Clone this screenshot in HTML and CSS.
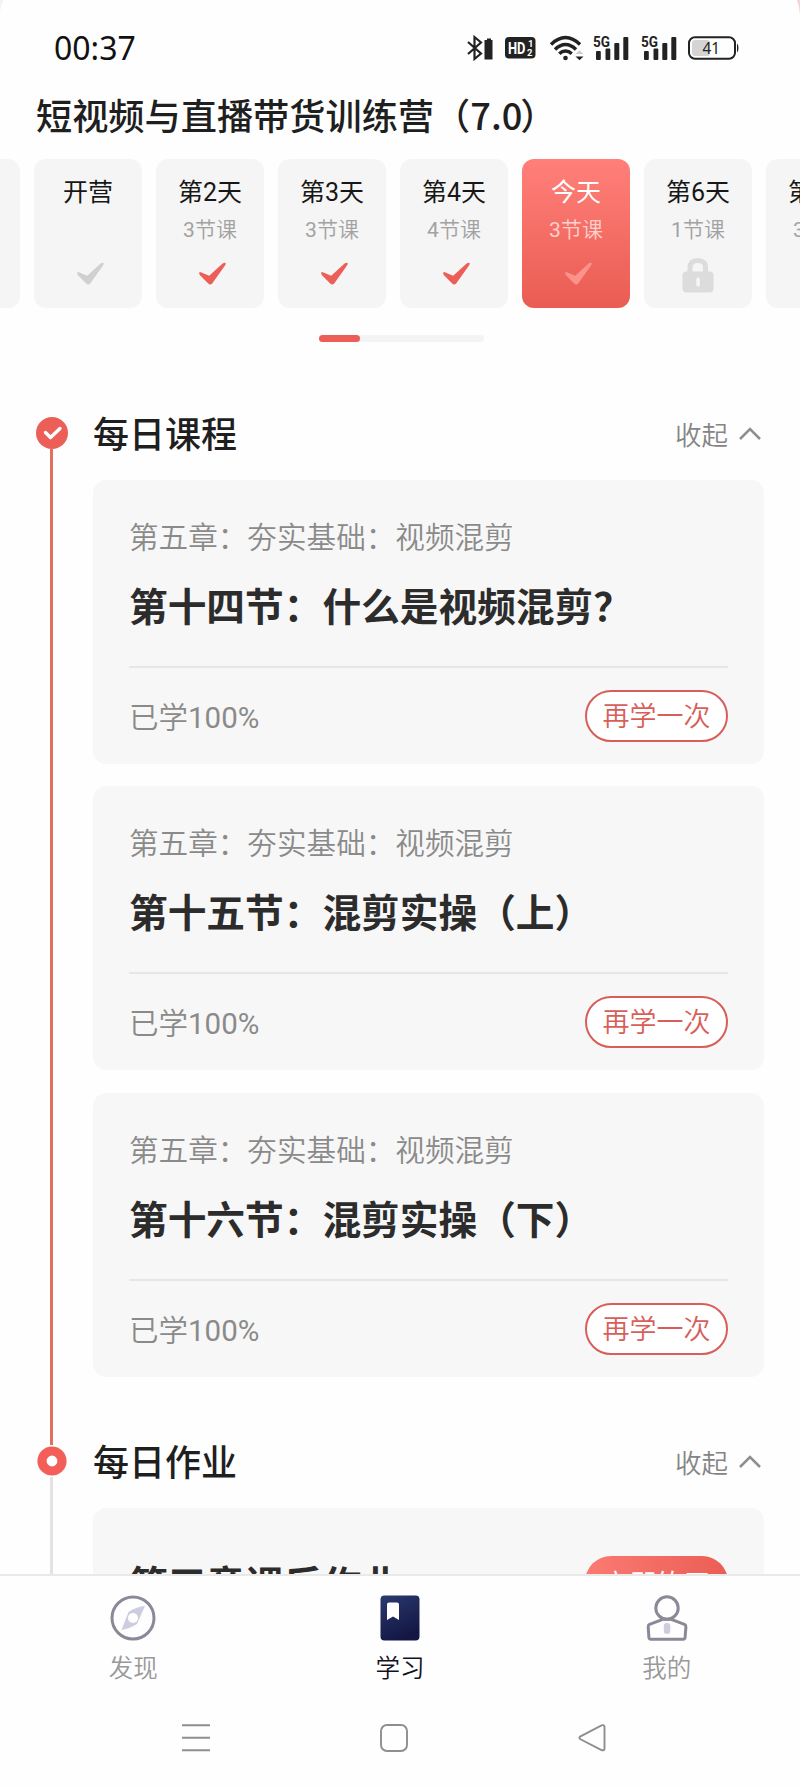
FILE: index.html
```html
<!DOCTYPE html>
<html lang="zh-CN">
<head>
<meta charset="utf-8">
<title>短视频与直播带货训练营</title>
<link rel="stylesheet" href="styles.css">
</head>
<body>
<svg class="defs" width="0" height="0" aria-hidden="true">
  <defs>
    <linearGradient id="book-fill" x1="0" y1="0" x2="0.4" y2="1"><stop offset="0" stop-color="#2a3a70"/><stop offset="1" stop-color="#141744"/></linearGradient>
    <symbol id="tick" viewBox="0 0 28 24"><path d="M1.2 11.2q0-1.400 1.600-1l8.400 3.600L24.600 1.600q2-1.200 2.900-.6.600.8-.5 2.500L14.200 21.500q-2 2.200-4 0L2 13.200q-.8-1-.8-2z"/></symbol>
    <symbol id="signal" viewBox="0 0 36 26"><g fill="#222"><rect x="3" y="16" width="4.800" height="9" rx="1"/><rect x="12.500" y="13.500" width="4.800" height="11.500" rx="1"/><rect x="21.300" y="8" width="5" height="17" rx="1"/><rect x="30.300" y="2" width="5" height="23" rx="1"/></g></symbol>
  </defs>
</svg>
<div class="phone">
  <svg class="corner corner-left" width="6" height="18" viewBox="0 0 6 18"><path d="M0 0H3Q1 4 0 12z" fill="#fbeeee"/></svg>
  <svg class="corner corner-right" width="6" height="18" viewBox="0 0 6 18"><path d="M6 0H3Q5 5 6 15z" fill="#f3d3d3"/></svg>

  <header class="status">
    <time class="clock">00:37</time>
    <div class="status-icons">
      <svg class="i-bt" width="26" height="26" viewBox="0 0 26 26"><path d="M1 7l13 11.500L7.500 24V2L14 7.500 1 19" fill="none" stroke="#222" stroke-width="2.200"/><path d="M20 3.500h4v1.500h1.500V24.500h-8V5H20z" fill="#222"/></svg>
      <svg class="i-hd" width="31" height="22" viewBox="0 0 31 22"><rect width="30.500" height="21.500" rx="4" fill="#222"/><text x="3" y="16.800" class="hd-text" textLength="17.500" lengthAdjust="spacingAndGlyphs">HD</text><text x="23" y="10" class="hd-num">1</text><text x="22" y="19" class="hd-num">2</text></svg>
      <svg class="i-wifi" width="34" height="26" viewBox="0 0 34 26"><g fill="none" stroke="#222" stroke-width="3.400"><path d="M1 9.500Q8 2.500 15.500 2.500T30 9.500"/><path d="M5 14.500Q10 9.500 15.500 9.500T26 14.500"/><path d="M9.300 18.700Q12 16 15.500 16T21.700 18.700"/></g><circle cx="15.500" cy="23" r="2.300" fill="#222"/><path d="M25.500 19l4-3.500 4 3.500z" fill="#ccc"/><path d="M25.500 21.500h8l-4 3.800z" fill="#222"/></svg>
      <svg class="i-signal" width="36" height="26"><use href="#signal"/><text x="0" y="12" class="net" textLength="17" lengthAdjust="spacingAndGlyphs">5G</text></svg>
      <svg class="i-signal second" width="36" height="26"><use href="#signal"/><text x="0" y="12" class="net" textLength="17" lengthAdjust="spacingAndGlyphs">5G</text></svg>
      <svg class="i-batt" width="52" height="24" viewBox="0 0 52 24"><rect x="4" y="4" width="18" height="16" rx="3" fill="#d4d4d4"/><rect x="1" y="1.200" width="46" height="21.500" rx="6" fill="none" stroke="#222" stroke-width="2"/><path d="M49.500 8.500q1 3.500 0 7z" fill="#222" stroke="#222"/><text x="14.500" y="18.300" class="batt-text" textLength="17.500" lengthAdjust="spacingAndGlyphs">41</text></svg>
    </div>
  </header>

  <main class="content">
    <h1 class="camp-title">短视频与直播带货训练营（7.0<span class="close">）</span></h1>

    <div class="days">
      <div class="day"></div>
      <div class="day"><strong>开营</strong><span></span><svg class="tick muted"><use href="#tick"/></svg></div>
      <div class="day"><strong>第2天</strong><span><b>3</b>节课</span><svg class="tick"><use href="#tick"/></svg></div>
      <div class="day"><strong>第3天</strong><span><b>3</b>节课</span><svg class="tick"><use href="#tick"/></svg></div>
      <div class="day"><strong>第4天</strong><span><b>4</b>节课</span><svg class="tick"><use href="#tick"/></svg></div>
      <div class="day today"><strong>今天</strong><span><b>3</b>节课</span><svg class="tick"><use href="#tick"/></svg></div>
      <div class="day"><strong>第6天</strong><span><b>1</b>节课</span><svg class="lock" width="32" height="35" viewBox="0 0 32 35"><path d="M8 15V10Q8 2.500 15.800 2.500T23.500 10V15" fill="none" stroke="#dcdcdc" stroke-width="5"/><rect x=".5" y="13.500" width="31" height="21" rx="4" fill="#dcdcdc"/><rect x="14.300" y="19.500" width="3.600" height="9" rx="1.500" fill="#f5f5f5"/></svg></div>
      <div class="day"><strong>第7天</strong><span><b>3</b>节课</span></div>
    </div>
    <div class="scroller"><i></i></div>

    <section class="step done">
      <div class="rail">
        <svg width="32" height="32" viewBox="0 0 32 32"><circle cx="16" cy="16" r="16" fill="#ec5f58"/><path d="M9.500 15.500l5 5 9.500-9" fill="none" stroke="#fff" stroke-width="3.400" stroke-linecap="round" stroke-linejoin="round"/></svg>
      </div>
      <div class="step-body">
        <div class="step-head"><h2>每日课程</h2><a class="fold">收起<svg width="22" height="13" viewBox="0 0 22 13"><path d="M1 12L11 2l10 10" fill="none" stroke="#8e8e8e" stroke-width="2.500"/></svg></a></div>
        <article class="lesson">
          <p class="chapter">第五章：夯实基础：视频混剪</p>
          <h3>第十四节：什么是视频混剪？</h3>
          <div class="lesson-foot"><span>已学<b>100%</b></span><a class="again">再学一次</a></div>
        </article>
        <article class="lesson">
          <p class="chapter">第五章：夯实基础：视频混剪</p>
          <h3>第十五节：混剪实操（上）</h3>
          <div class="lesson-foot"><span>已学<b>100%</b></span><a class="again">再学一次</a></div>
        </article>
        <article class="lesson">
          <p class="chapter">第五章：夯实基础：视频混剪</p>
          <h3>第十六节：混剪实操（下）</h3>
          <div class="lesson-foot"><span>已学<b>100%</b></span><a class="again">再学一次</a></div>
        </article>
      </div>
    </section>

    <section class="step next">
      <div class="rail">
        <svg width="32" height="32" viewBox="0 0 32 32"><circle cx="16" cy="16" r="10" fill="#fff" stroke="#f35f58" stroke-width="9.200"/></svg>
      </div>
      <div class="step-body">
        <div class="step-head"><h2>每日作业</h2><a class="fold">收起<svg width="22" height="13" viewBox="0 0 22 13"><path d="M1 12L11 2l10 10" fill="none" stroke="#8e8e8e" stroke-width="2.500"/></svg></a></div>
        <article class="homework"><h3>第五章课后作业</h3><a class="practice">立即练习</a></article>
      </div>
    </section>
  </main>

  <nav class="tabs">
    <a><svg width="46" height="46" viewBox="0 0 46 46"><circle cx="23" cy="23" r="21" fill="none" stroke="#8b8898" stroke-width="3"/><path d="M35 11L27 29Q20 33.500 11.500 35L18.500 17Q27 11.500 35 11z" fill="#cccddf"/><circle cx="23" cy="23" r="5" fill="#fff"/></svg>发现</a>
    <a class="on"><svg width="46" height="46" viewBox="0 0 46 46"><rect x="3.500" y=".5" width="39" height="45" rx="4" fill="url(#book-fill)"/><path d="M10 9.500q0-2 2-2h8q2 0 2 2v15.500l-6-3.500-6 3.500z" fill="#fff"/></svg>学习</a>
    <a><svg width="46" height="46" viewBox="0 0 46 46"><g fill="none" stroke="#8b8898" stroke-width="3" stroke-linejoin="round"><circle cx="23" cy="13" r="11.200"/><path d="M19.500 24.200h7L40.500 29.300Q42 30 41.900 31.800L41.100 42.300Q41 44.300 39 44.300H7Q5 44.300 4.900 42.300L4.200 31.800Q4.100 30 5.500 29.300z"/></g><rect x="19.800" y="28" width="6.500" height="11" rx="3.200" fill="#cccddf"/></svg>我的</a>
  </nav>
  <div class="system-nav">
    <svg width="28" height="28" viewBox="0 0 28 28"><path d="M0 1.300h28M0 13.700h28M0 26.200h28" stroke="#8e8e8e" stroke-width="2"/></svg>
    <svg width="28" height="28" viewBox="0 0 28 28"><rect x="1" y="1" width="26" height="26" rx="6" fill="none" stroke="#8e8e8e" stroke-width="1.900"/></svg>
    <svg width="28" height="28" viewBox="0 0 28 28"><path d="M2.500 12.300L23.500 1.400Q26.500.5 26.500 3V24.500Q26.500 27 23.500 26L2.500 15.300Q.3 13.800 2.500 12.300z" fill="none" stroke="#8e8e8e" stroke-width="1.900"/></svg>
  </div>
</div>
</body>
</html>
```
FILE: styles.css
```css
* { box-sizing: border-box; }
body, h1, h2, h3, p { margin: 0; }
body {
  font-family: Roboto, "Noto Sans CJK SC", sans-serif;
  color: #1f1f1f;
  background: #fff;
}
svg { display: block; flex: none; }
.defs { position: absolute; }

.phone {
  position: relative;
  display: flex;
  flex-direction: column;
  width: 800px;
  height: 1788px;
  overflow: hidden;
  background: #fefefe;
}
.corner { position: absolute; top: 0; }
.corner-left { left: 0; }
.corner-right { right: 0; }

/* status bar */
.status {
  display: flex;
  flex: none;
  align-items: center;
  justify-content: space-between;
  height: 87px;
  padding: 9px 60px 0 54px;
}
.clock { font: 32px/40px "Noto Sans", sans-serif; color: #111; }
.status-icons { display: flex; align-items: center; }
.status-icons svg { overflow: visible; }
.i-hd { margin-left: 12px; }
.i-wifi { margin-left: 14px; }
.i-signal { margin-left: 9px; }
.i-signal.second { margin-left: 12px; }
.i-batt { margin-left: 11px; }
.net { font: bold 15.500px Roboto, sans-serif; fill: #222; }
.hd-text { font: bold 16px Roboto, sans-serif; fill: #fff; }
.hd-num { font: bold 9.500px Roboto, sans-serif; fill: #fff; }
.batt-text { font: 17px "Noto Sans", sans-serif; fill: #222; }

.content { flex: 1; min-height: 0; overflow: hidden; }
.camp-title {
  height: 72px;
  padding-left: 36px;
  font: 500 36.200px/54px "Noto Sans CJK SC", sans-serif;
  white-space: nowrap;
}
.close { margin-left: -2px; }

/* day picker */
.days { display: flex; gap: 14px; margin-left: -88px; }
.day {
  display: flex;
  flex: none;
  flex-direction: column;
  align-items: center;
  width: 108px;
  height: 149px;
  padding-top: 17px;
  border-radius: 12px;
  background: #f5f5f5;
}
.day strong { font-size: 25px; line-height: 34px; font-weight: 400; color: #171717; }
.day span { height: 28px; margin-top: 6px; font-size: 21px; line-height: 28px; font-weight: 350; color: #a2a2a2; }
.day b, .lesson-foot b { font-weight: 400; }
.tick { width: 28px; height: 24px; margin: 18px 0 0 4px; fill: #ec5f58; }
.tick.muted { fill: #d0d0d0; }
.lock { margin-top: 14px; }
.day.today { background: linear-gradient(#ff8079, #ea5c53); }
.today strong { color: #fff; }
.day.today span { color: #ffd0cc; }
.today .tick { fill: #fb938c; }

.scroller { width: 165px; height: 7px; margin: 27px auto 0 319px; border-radius: 4px; background: #f4f4f4; }
.scroller i { display: block; width: 41px; height: 7px; border-radius: 4px; background: #ec5f58; }

/* timeline */
.step { display: flex; padding: 0 36px; }
.step.done { margin-top: 65px; }
.rail { display: flex; flex: none; flex-direction: column; align-items: center; width: 31px; padding-top: 10px; }
.rail::after { content: ""; flex: 1; width: 3px; background: #e2705f; }
.done .rail { margin-bottom: -46px; }
.next .rail { padding-top: 2px; }
.next .rail::after { background: #e3e3e3; }
.step-body { flex: 1; padding-left: 26px; }
.step-head { display: flex; align-items: center; justify-content: space-between; height: 52px; padding-right: 3px; }
.step-head h2 { padding-top: 5px; font-size: 36px; line-height: 52px; font-weight: 500; }
.fold { display: flex; align-items: center; gap: 11px; font-size: 26.500px; font-weight: 350; color: #858585; }

.lesson { height: 284px; margin-bottom: 22.300px; padding: 36px 36px 0; border-radius: 13px; background: #f7f7f7; }
.step-head + .lesson { margin-top: 21px; }
.chapter { font-size: 29.600px; line-height: 44px; font-weight: 350; color: #8a8a8a; }
h3 { font-size: 38.700px; line-height: 56px; font-weight: 700; color: #2c2c2c; white-space: nowrap; }
.lesson h3 { height: 86px; margin-top: 20px; }
.lesson-foot { display: flex; align-items: center; justify-content: space-between; height: 98px; border-top: 2px solid #e6e6e6; font-size: 29.500px; font-weight: 350; color: #8a8a8a; }
.lesson-foot > span { padding-bottom: 2px; }
.again, .practice { width: 143px; height: 52px; border-radius: 26px; font-size: 27px; text-align: center; }
.again { border: 2.500px solid #d85e5a; line-height: 51px; color: #d85e5a; background: #fff; }
.step.next { margin-top: 44px; }
.next .step-head { height: 37px; }
.homework { display: flex; justify-content: space-between; height: 170px; margin-top: 28px; padding: 48px 36px 0; border-radius: 13px; background: #f7f7f7; }
.homework h3 { padding-top: 2px; }
.practice { line-height: 59px; color: #fff; background: linear-gradient(100deg, #fb7b73, #ea5c53); }

/* bottom bars */
.tabs { display: grid; flex: none; grid-template-columns: repeat(3, 1fr); height: 118px; padding: 19px 0 0; border-top: 2px solid #e9e9e9; background: #fefefe; }
.tabs a { display: flex; flex-direction: column; align-items: center; gap: 10px; font-size: 24.500px; line-height: 36px; font-weight: 350; color: #999; }
.tabs .on { color: #11111f; }
.system-nav { display: grid; flex: none; grid-template-columns: repeat(3, 198px); justify-items: center; align-items: start; height: 96px; padding: 32px 0 0 97px; background: #fefefe; }
```
